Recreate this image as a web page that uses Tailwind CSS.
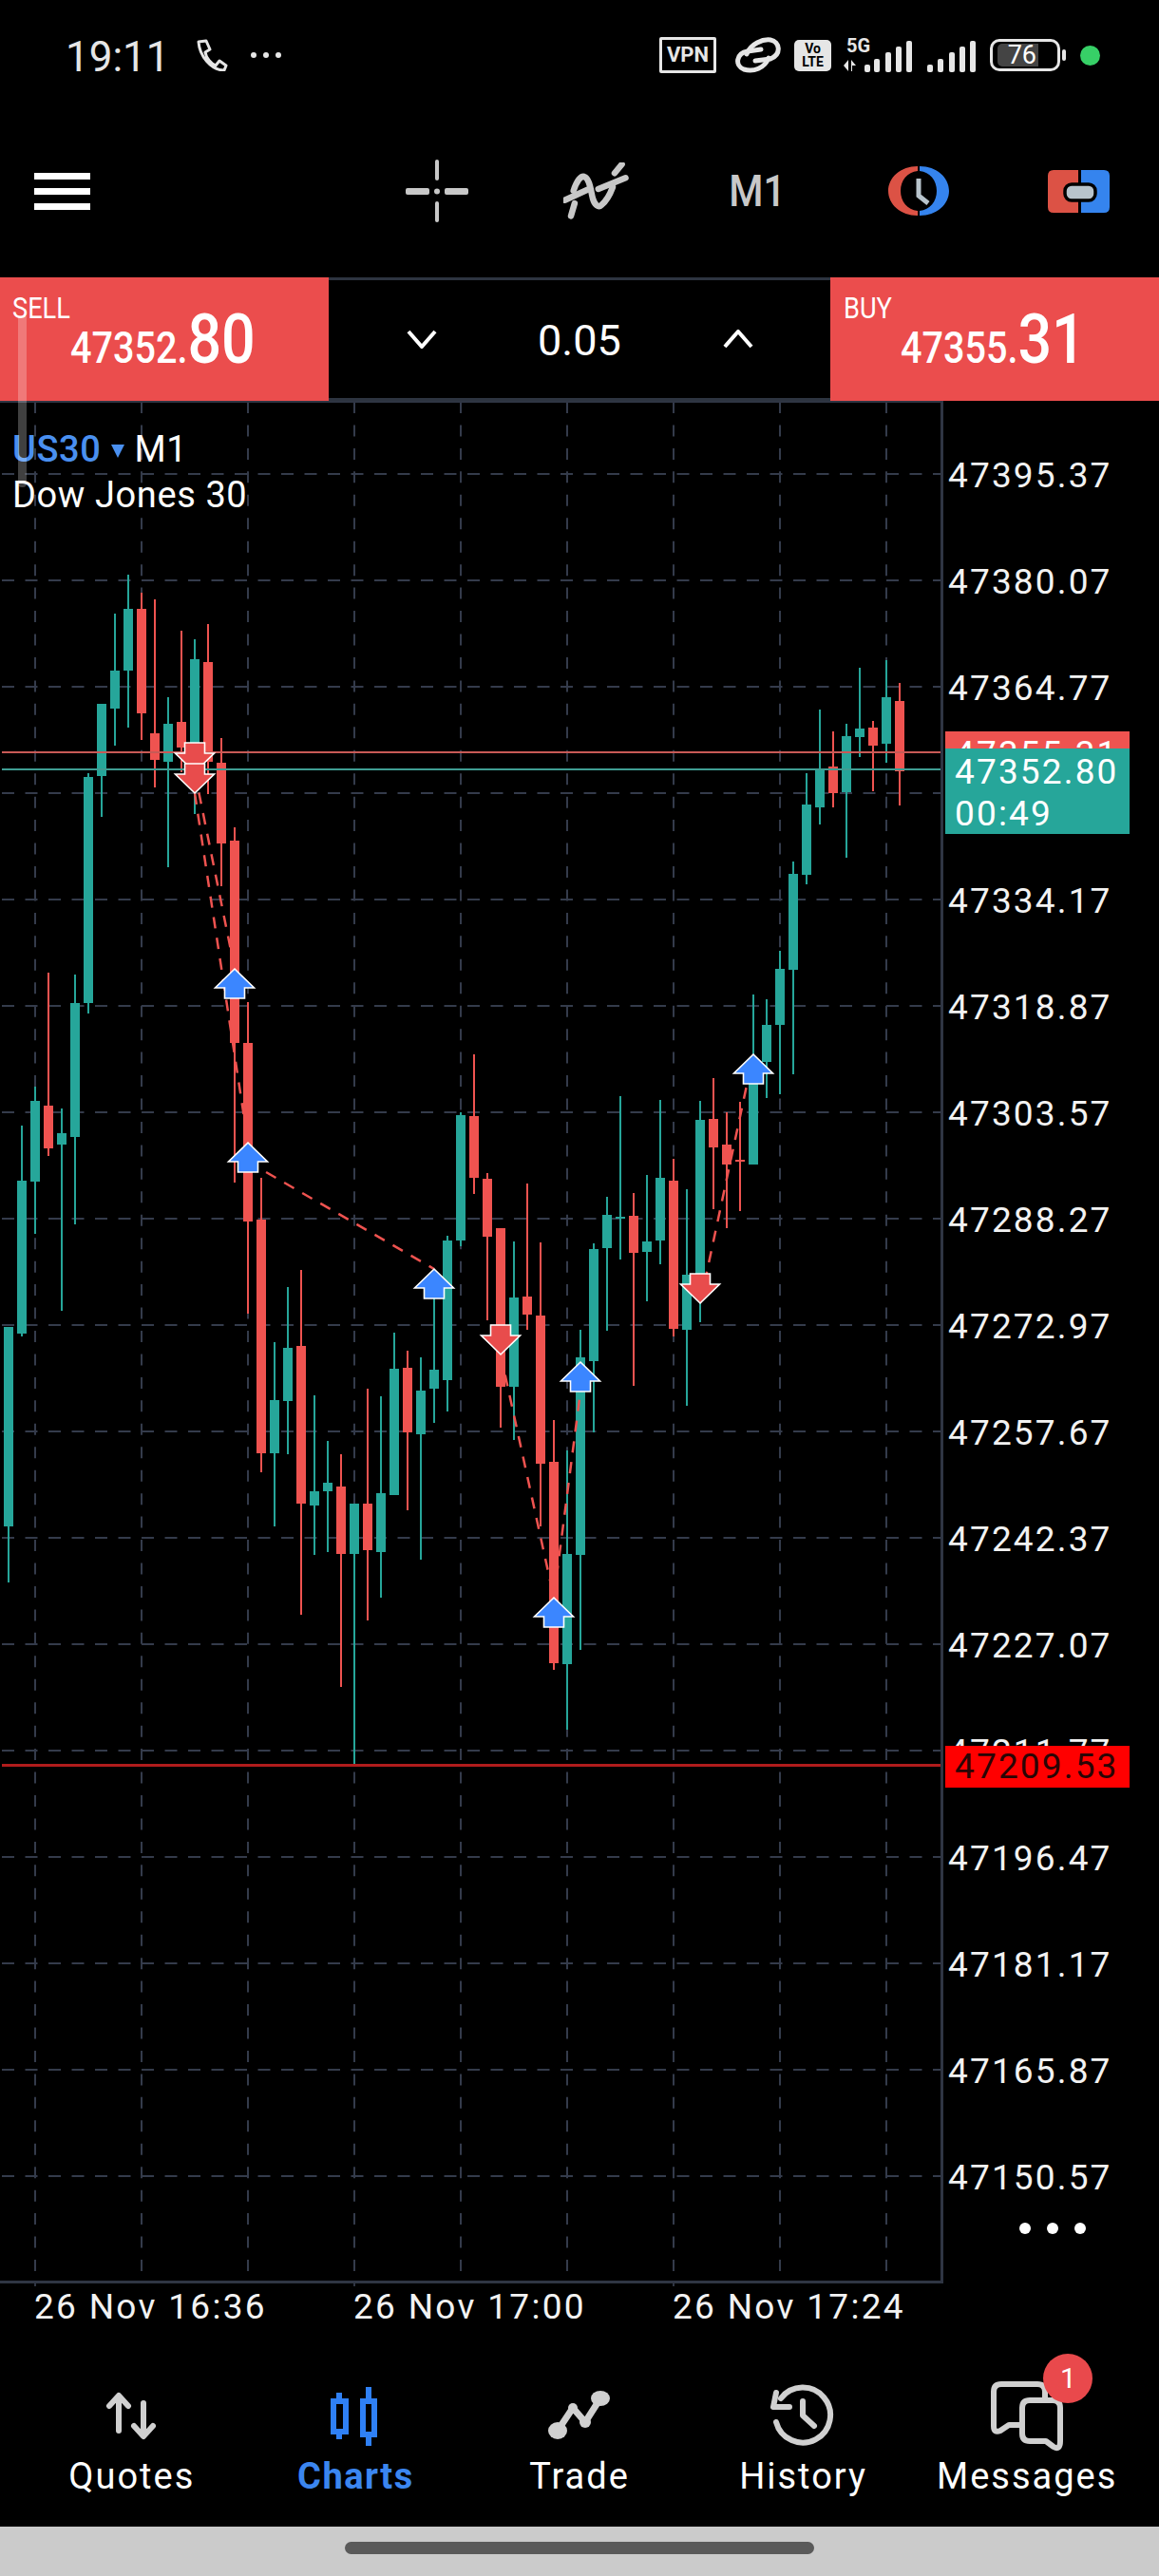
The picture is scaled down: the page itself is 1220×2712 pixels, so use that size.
<!DOCTYPE html>
<html lang="en">
<head>
  <meta charset="UTF-8" />
  <title>US30 M1 chart</title>
  <script src="https://cdn.jsdelivr.net/npm/@tailwindcss/browser@4"></script>
</head>
<body class="bg-black">
<div class="relative w-[1220px] h-[2712px] overflow-hidden bg-black flex flex-col font-['Roboto',sans-serif] text-white">

  <!-- Status bar -->
  <div class="h-[116px] flex items-center text-[#e6e6e6]">
    <span class="ml-[69px] mt-[3px] w-[108px] text-[44px] leading-none">19:11</span>
    <svg class="ml-[29px]" width="34" height="34" viewBox="0 0 34 34" fill="none" stroke="#e6e6e6" stroke-width="3" stroke-linejoin="round">
      <path d="M3 3 L11 2 L15 11 L10 14 C11 20 16 26 21 28 L25 23 L32 28 L30 33 C16 33 4 18 3 3 Z"/>
    </svg>
    <svg class="ml-[23px]" width="34" height="8" viewBox="0 0 34 8" fill="#e6e6e6"><circle cx="4" cy="4" r="3"/><circle cx="17" cy="4" r="3"/><circle cx="30" cy="4" r="3"/></svg>

    <div class="ml-[397px] w-[60px] h-[38px] border-[3px] border-[#e6e6e6] rounded-[2px] flex items-center justify-center text-[22px] font-bold leading-none">VPN</div>
    <svg class="ml-[19px]" width="50" height="38" viewBox="0 0 50 38" fill="none" stroke="#e6e6e6" stroke-width="5" stroke-linecap="round">
      <path d="M13 18 C17 7 30 2 38 3 C48 5 50 18 38 23 L22 25"/>
      <path d="M28 13 L14 15 C2 17 0 30 10 34 C20 37 32 33 36 22"/>
    </svg>
    <div class="ml-[13px] w-[39px] h-[33px] bg-[#e6e6e6] rounded-[5px] flex flex-col items-center justify-center text-black font-bold text-[14px] leading-[14px]"><span>Vo</span><span>LTE</span></div>
    <div class="relative ml-[12px] w-[76px] h-[36px]">
      <span class="absolute left-[4px] -top-[2px] text-[20px] font-bold leading-[20px]">5G</span>
      <svg class="absolute left-0 top-0" width="76" height="36" viewBox="0 0 76 36" fill="#e6e6e6">
        <path d="M1 29 L6 23 L6 35 Z M9 23 L14 29 L10 29 L10 35 L9 35 Z"/>
        <rect x="23" y="28" width="6" height="8" rx="2"/><rect x="33" y="22" width="6" height="14" rx="2"/><rect x="45" y="15" width="6" height="21" rx="2"/><rect x="56" y="9" width="6" height="27" rx="2"/><rect x="67" y="3" width="6" height="33" rx="2"/>
      </svg>
    </div>
    <svg class="ml-[13px]" width="54" height="36" viewBox="0 0 54 36" fill="#e6e6e6">
      <rect x="0" y="28" width="6" height="8" rx="2"/><rect x="11" y="22" width="6" height="14" rx="2"/><rect x="23" y="15" width="6" height="21" rx="2"/><rect x="34" y="9" width="6" height="27" rx="2"/><rect x="45" y="3" width="6" height="33" rx="2"/>
    </svg>
    <div class="ml-[12px] relative w-[74px] h-[34px] border-[3px] border-[#e6e6e6] rounded-[10px]">
      <div class="absolute left-[5px] top-[2px] w-[43px] h-[24px] bg-[#444444] rounded-l-[5px] flex items-center justify-end pr-[2px] text-[27px] leading-none text-white">76</div>
      <div class="absolute -right-[9px] top-[8px] w-[4px] h-[12px] bg-[#e6e6e6] rounded-full"></div>
    </div>
    <div class="ml-[21px] w-[21px] h-[21px] rounded-full bg-[#37d067]"></div>
  </div>

  <!-- Toolbar -->
  <div class="h-[176px] flex items-center pb-[6px]">
    <div class="flex-1 pl-[36px]">
      <div class="w-[59px] flex flex-col gap-[9px]">
        <div class="h-[7px] bg-white"></div>
        <div class="h-[7px] bg-white"></div>
        <div class="h-[7px] bg-white"></div>
      </div>
    </div>
    <div class="w-[169px] flex justify-center">
      <svg width="70" height="66" viewBox="0 0 70 66" fill="#c8c8c8">
        <rect x="2" y="30" width="25" height="7" rx="2"/><rect x="43" y="30" width="25" height="7" rx="2"/>
        <rect x="33" y="0" width="4" height="22" rx="2"/><rect x="33" y="44" width="4" height="22" rx="2"/>
        <circle cx="35" cy="33.5" r="3"/>
      </svg>
    </div>
    <div class="w-[169px] flex justify-center">
      <svg width="72" height="60" viewBox="13 12 72 60" fill="none" stroke="#c8c8c8" stroke-width="6.5" stroke-linecap="round">
        <path d="M14.5 51.7 L38.3 40.7"/>
        <path d="M49.8 40 L78.5 28.3"/>
        <path d="M67 23.3 L74.6 14"/>
        <path d="M21 68.3 L24.9 55"/>
        <path d="M23.7 41.7 C27 32 31 26 35 27 C41 29 42 43 44 50 C46 57 50 60 53 57 C58 53 62 46 65 38"/>
      </svg>
    </div>
    <div class="w-[169px] flex justify-center">
      <span class="text-[46px] leading-none font-medium text-[#c8c8c8] scale-x-[.9]">M1</span>
    </div>
    <div class="w-[169px] flex justify-center">
      <svg width="64" height="52" viewBox="0 0 64 52">
        <path fill="#dc5245" d="M31 0 C13 0 0 12 0 26 C0 40 13 52 31 52 L31 47 C20 46 13 37 13 26 C13 15 20 6 31 5 Z"/>
        <path fill="#3584ee" d="M33 0 C51 0 64 12 64 26 C64 40 51 52 33 52 L33 47 C44 46 51 37 51 26 C51 15 44 6 33 5 Z"/>
        <path fill="none" stroke="#b8c4cc" stroke-width="5" d="M32 13 L32 31 L42 39"/>
      </svg>
    </div>
    <div class="w-[169px] flex justify-center">
      <svg width="65" height="45" viewBox="0 0 65 45">
        <path fill="#dc5245" d="M32 0 H6 Q0 0 0 6 V39 Q0 45 6 45 H32 Z"/>
        <path fill="#3584ee" d="M35 0 H59 Q65 0 65 6 V39 Q65 45 59 45 H35 Z"/>
        <rect x="18" y="15" width="32" height="17" rx="7" fill="#b8c4cc" stroke="#000" stroke-width="3.5"/>
      </svg>
    </div>
  </div>

  <!-- Sell / volume / Buy bar -->
  <div class="h-[130px] flex">
    <div class="relative w-[346px] bg-[#eb4d4d]">
      <span class="absolute left-[13px] top-[14px] text-[32px] leading-[36px] scale-x-[.85] origin-left">SELL</span>
      <div class="absolute left-[74px] top-[30px] flex items-baseline font-medium scale-x-[.86] origin-left">
        <span class="text-[46px] leading-[70px]">47352.</span><span class="text-[73px] leading-[70px]">80</span>
      </div>
    </div>
    <div class="flex-1 flex items-center border-y-[3px] border-[#2d3440] bg-black">
      <svg class="ml-[82px]" width="32" height="20" viewBox="0 0 32 20" fill="none" stroke="#fff" stroke-width="4"><path d="M2 2 L16 18 L30 2"/></svg>
      <span class="ml-[106px] mt-[2px] text-[45px] leading-none">0.05</span>
      <svg class="ml-[107px]" width="32" height="20" viewBox="0 0 32 20" fill="none" stroke="#fff" stroke-width="4"><path d="M2 18 L16 2 L30 18"/></svg>
    </div>
    <div class="relative w-[346px] bg-[#eb4d4d]">
      <span class="absolute left-[14px] top-[14px] text-[32px] leading-[36px] scale-x-[.85] origin-left">BUY</span>
      <div class="absolute left-[74px] top-[30px] flex items-baseline font-medium scale-x-[.86] origin-left">
        <span class="text-[46px] leading-[70px]">47355.</span><span class="text-[73px] leading-[70px]">31</span>
      </div>
    </div>
  </div>

  <!-- Chart and price axis -->
  <div class="relative h-[1985px] flex">
    <svg id="chart" class="block shrink-0" width="993" height="1985" viewBox="0 422 993 1985"></svg>

    <div class="flex-1 pt-[23px] pl-[5px] flex flex-col text-[37px] tracking-[2.15px] text-[#f2f2f2]">
      <div class="h-[112px] shrink-0 flex items-center">47395.37</div>
      <div class="h-[112px] shrink-0 flex items-center">47380.07</div>
      <div class="h-[112px] shrink-0 flex items-center">47364.77</div>
      <div class="h-[112px] shrink-0 flex items-center">47349.47</div>
      <div class="h-[112px] shrink-0 flex items-center">47334.17</div>
      <div class="h-[112px] shrink-0 flex items-center">47318.87</div>
      <div class="h-[112px] shrink-0 flex items-center">47303.57</div>
      <div class="h-[112px] shrink-0 flex items-center">47288.27</div>
      <div class="h-[112px] shrink-0 flex items-center">47272.97</div>
      <div class="h-[112px] shrink-0 flex items-center">47257.67</div>
      <div class="h-[112px] shrink-0 flex items-center">47242.37</div>
      <div class="h-[112px] shrink-0 flex items-center">47227.07</div>
      <div class="h-[112px] shrink-0 flex items-center">47211.77</div>
      <div class="h-[112px] shrink-0 flex items-center">47196.47</div>
      <div class="h-[112px] shrink-0 flex items-center">47181.17</div>
      <div class="h-[112px] shrink-0 flex items-center">47165.87</div>
      <div class="h-[112px] shrink-0 flex items-center">47150.57</div>
    </div>

    <!-- symbol label -->
    <div class="absolute left-[13px] top-[27px] text-[38px] leading-[48px] tracking-[.6px]">
      <div class="flex items-center">
        <span class="font-medium text-[#4a90f0]">US30</span>
        <svg class="ml-[11px] mt-[3px]" width="14" height="14" viewBox="0 0 14 14" fill="#4a90f0"><path d="M0 0 H14 L7 14 Z"/></svg>
        <span class="ml-[10px]">M1</span>
      </div>
      <div>Dow Jones 30</div>
    </div>

    <!-- price tags over the axis -->
    <div class="absolute left-[995px] top-[348px] w-[194px] h-[18px] bg-[#ef5350] overflow-hidden text-[37px] tracking-[2.15px] leading-[44px] pl-[10px] pt-[2px]">47355.31</div>
    <div class="absolute left-[995px] top-[366px] w-[194px] h-[90px] bg-[#26a69a] pl-[10px] pt-[3px] text-[37px] tracking-[2.15px] leading-[44px]">
      <div>47352.80</div>
      <div>00:49</div>
    </div>
    <div class="absolute left-[995px] top-[1416px] w-[194px] h-[44px] bg-[#ff0000] pl-[10px] text-[37px] tracking-[2.15px] leading-[44px] text-[#2a0505]">47209.53</div>

    <div class="absolute left-[1073px] top-[1918px] flex gap-[17px]">
      <div class="w-[12px] h-[12px] rounded-full bg-white"></div>
      <div class="w-[12px] h-[12px] rounded-full bg-white"></div>
      <div class="w-[12px] h-[12px] rounded-full bg-white"></div>
    </div>
  </div>

  <!-- Time axis -->
  <div class="h-[42px] flex items-center pl-[36px] text-[37px] tracking-[2.3px] leading-none text-[#f2f2f2]">
    <div class="w-[336px]">26 Nov 16:36</div>
    <div class="w-[336px]">26 Nov 17:00</div>
    <div class="w-[336px]">26 Nov 17:24</div>
  </div>

  <!-- Bottom navigation -->
  <div class="flex-1 grid grid-cols-5 px-[21px] pt-[61px] text-[38px] tracking-[2px]">
    <div class="flex flex-col items-center">
      <svg width="80" height="68" viewBox="0 0 80 68" fill="none" stroke="#d0d0d0" stroke-width="6" stroke-linecap="round" stroke-linejoin="round">
        <path d="M26 49 V13 M16 23 L26 12 L36 23"/>
        <path d="M52 20 V53 M42 44 L52 55 L62 44"/>
      </svg>
      <span class="mt-[3px] leading-[52px]">Quotes</span>
    </div>
    <div class="flex flex-col items-center text-[#3b86f0]">
      <svg width="80" height="68" viewBox="0 0 80 68" fill="none" stroke="#2f80f5" stroke-width="6">
        <path d="M23 9 V18 M23 50 V58 M54 3 V18 M54 53 V65"/>
        <rect x="17" y="18" width="13" height="32"/>
        <rect x="48" y="18" width="12" height="35"/>
      </svg>
      <span class="mt-[3px] leading-[52px] font-bold tracking-[1.5px]">Charts</span>
    </div>
    <div class="flex flex-col items-center">
      <svg width="80" height="68" viewBox="0 0 80 68" fill="#d0d0d0" stroke="#d0d0d0" stroke-width="7" stroke-linejoin="round">
        <path fill="none" d="M17 49 L33 25 L46 40 L62 15"/>
        <ellipse cx="17" cy="49" rx="10" ry="9" stroke="none"/>
        <ellipse cx="62" cy="15" rx="10" ry="8" stroke="none"/>
        <circle cx="33" cy="25" r="5" stroke="none"/>
        <circle cx="46" cy="40" r="6" stroke="none"/>
      </svg>
      <span class="mt-[3px] leading-[52px]">Trade</span>
    </div>
    <div class="flex flex-col items-center">
      <svg width="80" height="68" viewBox="0 0 80 68" fill="none" stroke="#d0d0d0" stroke-width="6" stroke-linecap="round" stroke-linejoin="round">
        <path d="M11 40 A29 29 0 1 0 16 15"/>
        <path d="M11 9 L8 24 L25 24"/>
        <path d="M39 18 V33 L51 44"/>
      </svg>
      <span class="mt-[3px] leading-[52px]">History</span>
    </div>
    <div class="relative flex flex-col items-center">
      <svg class="overflow-visible" width="80" height="68" viewBox="0 0 80 68" fill="none" stroke="#d0d0d0" stroke-width="6" stroke-linecap="round" stroke-linejoin="round">
        <path d="M59 14 V8 Q59 0 51 0 H13 Q5 0 5 8 V44 Q5 52 12 49 L21 43 H32"/>
        <path d="M43 17 H67 Q75 17 75 25 V60 Q75 70 68 66 L60 60 H43 Q35 60 35 52 V25 Q35 17 43 17 Z"/>
      </svg>
      <div class="absolute left-[135px] top-[-32px] w-[52px] h-[52px] rounded-full bg-[#e9494c] flex items-center justify-center text-[30px] leading-none tracking-normal">1</div>
      <span class="mt-[3px] leading-[52px]">Messages</span>
    </div>
  </div>

  <!-- Gesture bar -->
  <div class="h-[52px] bg-[#cbcbcb] flex justify-center pt-[16px]">
    <div class="w-[494px] h-[13px] rounded-full bg-[#5a5a5a]"></div>
  </div>

  <div class="absolute left-[19px] top-[333px] w-[9px] h-[180px] bg-white/25 rounded-b-[4px]"></div>
</div>

<script>
  const GREEN = "#26a69a", RED = "#ef5350", GRID = "#343b4b";
  const chart = document.getElementById("chart");

  function add(tag, attrs) {
    const el = document.createElementNS("http://www.w3.org/2000/svg", tag);
    for (const k in attrs) el.setAttribute(k, attrs[k]);
    chart.appendChild(el);
    return el;
  }

  // grid
  for (let y = 499; y <= 2291; y += 112) {
    add("line", { x1: 2, x2: 990, y1: y, y2: y, stroke: GRID, "stroke-width": 2, "stroke-dasharray": "13 11.5" });
  }
  for (let x = 37; x <= 933; x += 112) {
    add("line", { x1: x, x2: x, y1: 423, y2: 2396, stroke: GRID, "stroke-width": 2, "stroke-dasharray": "12 12.45" });
  }

  // candles: [color, wick top, body top, body bottom, wick bottom], one every 14px from x = 9
  const candles = [
    [1,1397,1397,1607,1666],[1,1185,1243,1404,1407],[1,1144,1159,1244,1299],[0,1024,1164,1209,1217],
    [1,1167,1193,1205,1380],[1,1026,1056,1197,1289],[1,814,818,1056,1067],[1,741,741,817,860],
    [1,646,706,746,785],[1,605,641,706,766],[0,624,641,751,779],[0,631,772,800,829],
    [1,734,762,802,913],[0,664,760,787,813],[1,673,694,793,857],[0,657,697,802,836],
    [0,777,803,888,933],[0,871,885,1098,1245],[0,1055,1098,1286,1383],[0,1240,1284,1530,1550],
    [1,1413,1474,1530,1607],[1,1355,1419,1475,1531],[0,1337,1417,1583,1700],[1,1469,1570,1585,1637],
    [1,1517,1561,1570,1634],[0,1531,1565,1636,1776],[1,1583,1583,1636,1857],[0,1462,1583,1632,1706],
    [1,1470,1572,1634,1682],[1,1403,1441,1574,1574],[0,1422,1440,1508,1590],[1,1429,1464,1510,1642],
    [1,1367,1442,1462,1498],[1,1301,1306,1453,1486],[1,1171,1174,1306,1312],[0,1110,1175,1240,1257],
    [0,1235,1241,1302,1390],[0,1293,1293,1460,1503],[1,1307,1366,1460,1516],[0,1246,1365,1384,1400],
    [0,1308,1385,1541,1607],[0,1495,1539,1751,1758],[1,1527,1636,1752,1821],[1,1400,1429,1637,1737],
    [1,1309,1315,1433,1508],[1,1260,1279,1314,1401],[1,1154,1281,1283,1326],[0,1256,1280,1319,1459],
    [1,1237,1307,1318,1370],[1,1158,1240,1306,1331],[0,1220,1243,1399,1407],[1,1252,1342,1400,1480],
    [1,1159,1179,1363,1392],[0,1135,1178,1208,1273],[0,1171,1205,1226,1293],[0,1160,1221,1223,1275],
    [1,1047,1140,1226,1226],[1,1052,1079,1118,1156],[1,1001,1020,1079,1152],[1,907,920,1021,1131],
    [1,814,847,921,931],[1,747,809,850,868],[0,770,807,835,850],[1,762,775,834,903],
    [1,703,767,776,797],[0,759,766,785,833],[1,695,734,783,803],[0,719,738,812,848]
  ];
  candles.forEach((c, i) => {
    const x = 9 + 14 * i, fill = c[0] ? GREEN : RED;
    add("rect", { x: x - 1, y: c[1], width: 2, height: c[4] - c[1], fill });
    add("rect", { x: x - 5, y: c[2], width: 10, height: c[3] - c[2], fill });
  });

  // price lines
  add("rect", { x: 2, y: 791, width: 988, height: 2, fill: "#c85a56" });
  add("rect", { x: 2, y: 809, width: 988, height: 2, fill: "#3f9d93" });
  add("rect", { x: 2, y: 1857, width: 988, height: 3, fill: "#b01c1c" });

  // trade links
  [[205,813,247,1020],[205,835,261,1203],[261,1223,457,1336],[527,1426,583,1682],[583,1682,611,1465],[737,1372,793,1110]].forEach(l => {
    add("line", { x1: l[0], y1: l[1], x2: l[2], y2: l[3], stroke: RED, "stroke-width": 2.5, "stroke-dasharray": "12 10" });
  });

  // trade arrows
  function upArrow(x, y) {
    add("path", { d: `M${x} ${y} L${x+20.5} ${y+20} H${x+10.5} V${y+31} H${x-10.5} V${y+20} H${x-20.5} Z`, fill: "#3b86ff", stroke: "#fff", "stroke-width": 1.6 });
  }
  function downArrow(x, y) {
    add("path", { d: `M${x} ${y} L${x+20.5} ${y-20} H${x+10.5} V${y-31} H${x-10.5} V${y-20} H${x-20.5} Z`, fill: "#e84c4c", stroke: "#fff", "stroke-width": 1.6 });
  }
  [[247,1020],[261,1203],[457,1336],[583,1682],[611,1434],[793,1110]].forEach(a => upArrow(a[0], a[1]));
  [[205,813],[205,835],[527,1426],[737,1372]].forEach(a => downArrow(a[0], a[1]));

  // chart frame
  add("rect", { x: 0, y: 422, width: 993, height: 2, fill: "#2f3543" });
  add("rect", { x: 990, y: 422, width: 3, height: 1982, fill: "#2f3543" });
  add("rect", { x: 0, y: 2401, width: 993, height: 3, fill: "#2f3543" });
  [37, 373, 709].forEach(x => add("rect", { x: x - 1, y: 2404, width: 2, height: 3, fill: "#2f3543" }));
</script>
</body>
</html>
